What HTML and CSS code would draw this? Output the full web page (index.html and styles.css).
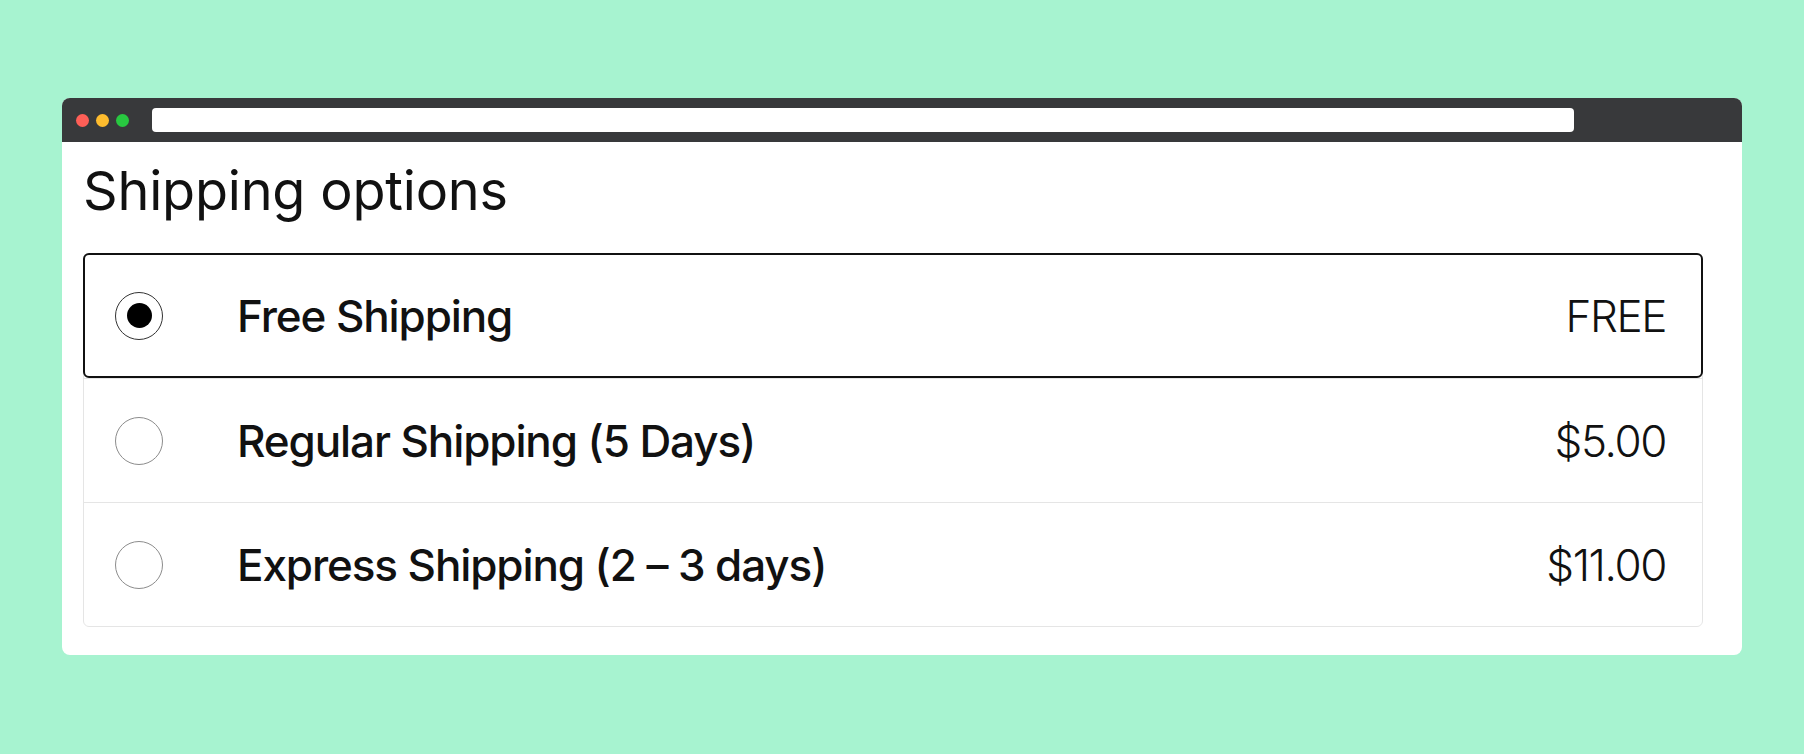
FILE: index.html
```html
<!DOCTYPE html>
<html lang="en">
<head>
    <meta charset="UTF-8">
    <meta name="viewport" content="width=device-width, initial-scale=1.0">
    <title>Shipping options</title>
    <link rel="stylesheet" href="styles.css">
</head>
<body>
    <div class="browser">
        <div class="browser-bar">
            <div class="dots">
                <span class="dot red"></span>
                <span class="dot yellow"></span>
                <span class="dot green"></span>
            </div>
            <div class="address"></div>
        </div>
        <div class="browser-body">
            <h2>Shipping options</h2>
            <div class="options">
                <label class="option selected">
                    <span class="radio"></span>
                    <span class="name">Free Shipping</span>
                    <span class="price">FREE</span>
                </label>
                <label class="option">
                    <span class="radio"></span>
                    <span class="name">Regular Shipping (5 Days)</span>
                    <span class="price">$5.00</span>
                </label>
                <label class="option">
                    <span class="radio"></span>
                    <span class="name">Express Shipping (2 – 3 days)</span>
                    <span class="price">$11.00</span>
                </label>
            </div>
        </div>
    </div>
</body>
</html>
```

FILE: styles.css
```css
* {
    box-sizing: border-box;
}
body {
    margin: 0;
    padding: 98px 62px 0;
    background: #a7f3d0;
    font-family: Inter, "Noto Sans", sans-serif;
    color: #111;
}
.browser {
    background: white;
    border-radius: 8px;
    overflow: hidden;
}
.browser-bar {
    display: flex;
    align-items: center;
    height: 44px;
    background: #38393b;
    padding: 0 168px 0 14px;
}
.dots {
    display: flex;
    gap: 7px;
    width: 76px;
}
.dot {
    width: 13px;
    height: 13px;
    border-radius: 50%;
}
.red { background: #fe5f57; }
.yellow { background: #febc2e; }
.green { background: #28c840; }
.address {
    flex: 1;
    height: 24px;
    background: white;
    border-radius: 4px;
}
.browser-body {
    padding: 16px 39px 28px 21px;
}
.browser-body h2 {
    margin: 0 0 29px;
    font-size: 54px;
    font-weight: 400;
    line-height: 66px;
    letter-spacing: -0.2px;
}
.options {
    border: 1px solid #e5e5e5;
    border-radius: 6px;
}
.option {
    display: flex;
    align-items: center;
    height: 124px;
    padding: 0 36px 0 31px;
    border-top: 1px solid #e5e5e5;
}
.option:first-child {
    border-top: none;
}
.option.selected {
    margin: -1px -1px 0;
    height: 125px;
    border: 2px solid #111;
    border-radius: 6px;
    padding: 0 35px 0 30px;
}
.radio {
    width: 48px;
    height: 48px;
    border: 1px solid #8c8c8c;
    border-radius: 50%;
    display: flex;
    align-items: center;
    justify-content: center;
    margin-right: 74px;
}
.selected .radio {
    border-color: #333;
}
.selected .radio::after {
    content: "";
    width: 25px;
    height: 25px;
    border-radius: 50%;
    background: black;
}
.name {
    flex: 1;
    font-size: 44px;
    font-weight: 500;
    letter-spacing: -1.1px;
}
.price {
    font-size: 44px;
    font-weight: 300;
    letter-spacing: -1.4px;
}
```
